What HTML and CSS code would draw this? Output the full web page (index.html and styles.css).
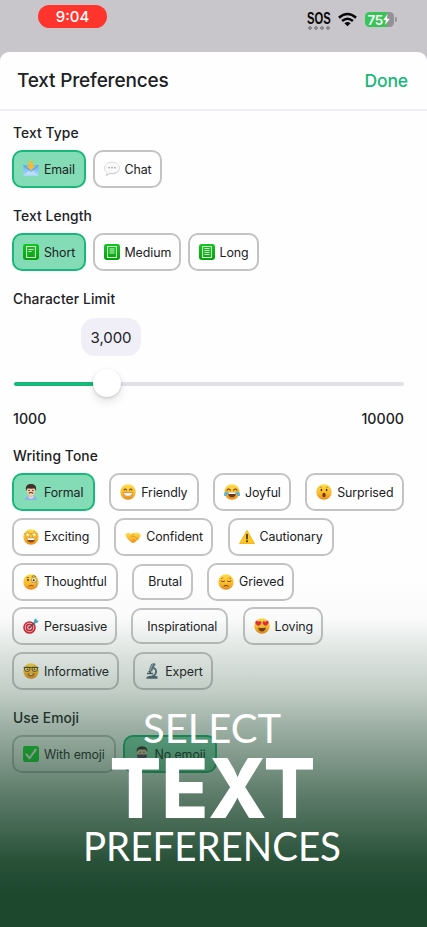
FILE: index.html
```html
<!DOCTYPE html>
<html lang="en">
<head>
<meta charset="utf-8">
<meta name="viewport" content="width=device-width, initial-scale=1">
<title>Text Preferences</title>
<link rel="stylesheet" href="styles.css">
</head>
<body>
<svg class="defs" width="0" height="0" aria-hidden="true">
  <defs>
    <linearGradient id="gold" x1="0" y1="0" x2="0" y2="1"><stop offset="0" stop-color="#ffdc48"/><stop offset=".6" stop-color="#fbb92c"/><stop offset="1" stop-color="#e58a1c"/></linearGradient>
    <linearGradient id="green" x1="0" y1="0" x2="0" y2="1"><stop offset="0" stop-color="#17c427"/><stop offset="1" stop-color="#0a9e12"/></linearGradient>
    <linearGradient id="sky" x1="0" y1="0" x2="0" y2="1"><stop offset="0" stop-color="#6fb2ef"/><stop offset="1" stop-color="#a9d3fb"/></linearGradient>
  </defs>
  <symbol id="mail" viewBox="0 0 16 16"><path fill="url(#sky)" d="M.5 4h15v10.500h-15z"/><path fill="#b9dcfb" d="M.5 14.500 6 9.500h4l5.500 5z"/><path fill="none" stroke="#4a8fd8" stroke-width=".8" d="m.5 4.300 7.500 6 7.500-6"/><path fill="#fdb924" d="M6.200.3h3.600v4.400h2.400L8 9.300 3.800 4.700h2.400z"/></symbol>
  <symbol id="bubble" viewBox="0 0 16 16"><path fill="#fbfbfc" stroke="#d0d1d6" stroke-width=".8" d="M8 1.200c4.300 0 7.500 2.500 7.500 5.800S12.300 12.700 8 12.700c-.9 0-1.700-.1-2.400-.3-.9 1-2.100 1.800-3.600 2.200.8-.9 1.100-1.800 1-3C1.400 10.500.5 8.900.5 7 .5 3.700 3.700 1.200 8 1.200z"/><path fill="none" stroke="#c5c6cb" stroke-width=".8" d="M2 14.500c1.500-.3 2.700-1.100 3.700-2.100 3.600.7 7.600-.5 9.200-3.200"/><circle cx="5" cy="6.700" r=".8" fill="#8d8e94"/><circle cx="8" cy="6.700" r=".8" fill="#8d8e94"/><circle cx="11" cy="6.700" r=".8" fill="#8d8e94"/></symbol>
  <symbol id="page" viewBox="0 0 16 16"><rect width="16" height="16" rx="2.400" fill="url(#green)"/><rect x="3.600" y="2.500" width="8.800" height="11" fill="none" stroke="#d3f8cd" stroke-width="1"/></symbol>
  <symbol id="short" viewBox="0 0 16 16"><use href="#page"/><path stroke="#d3f8cd" d="M5.500 5.500h5M5.500 7.500h3"/></symbol>
  <symbol id="medium" viewBox="0 0 16 16"><use href="#page"/><path stroke="#d3f8cd" d="M5.500 5h5M5.500 7h5M5.500 9h5"/></symbol>
  <symbol id="long" viewBox="0 0 16 16"><use href="#page"/><path stroke="#d3f8cd" d="M5.500 4.500h5M5.500 6.500h5M5.500 8.500h5M5.500 10.500h5"/></symbol>
  <symbol id="man" viewBox="0 0 16 16"><path fill="#8cb5e5" d="M2 16c0-3 2-4.500 6-4.500s6 1.500 6 4.500z"/><path fill="#eab695" d="M6 9h4v3.500l-2 1.700-2-1.700z"/><path fill="#dfe9f5" d="m5.800 12 2.200 1.700 2.200-1.700.4 1.500L8 14.800l-2.600-1.300z"/><ellipse cx="8" cy="6.500" rx="4.300" ry="5.200" fill="#f5cba9"/><path fill="#40312b" d="M3.200 7C2 2.500 4 .1 8 .1s6 2.400 4.800 6.900L11.700 4.500C9 4.800 6 4.600 4.400 4.500z"/><circle cx="6.100" cy="6.400" r=".7" fill="#2e2521"/><circle cx="9.900" cy="6.400" r=".7" fill="#2e2521"/><path d="M5.800 9.300q2.200-1.600 4.400 0" fill="none" stroke="#5b3428" stroke-width="1.200"/></symbol>
  <symbol id="face" viewBox="0 0 16 16"><circle cx="8" cy="8" r="7.700" fill="url(#gold)"/></symbol>
  <symbol id="grin" viewBox="0 0 16 16"><use href="#face"/><path fill="none" stroke="#6b4215" stroke-width="1.100" stroke-linecap="round" d="M4 6q1.200-2 2.400 0M9.600 6q1.200-2 2.400 0"/><path fill="#fff" stroke="#a8702a" stroke-width=".6" d="M3.300 8.700h9.400q-.4 3.700-4.700 3.700T3.300 8.700z"/></symbol>
  <symbol id="joy" viewBox="0 0 16 16"><use href="#face"/><path fill="none" stroke="#6b4215" stroke-width="1.100" stroke-linecap="round" d="M3 6.200q1.700-2.400 3.400 0M9.600 6.200q1.700-2.400 3.400 0"/><path fill="#6a3719" d="M3.600 8.300h8.800q-.4 5-4.400 5t-4.400-5z"/><path fill="#fff" d="M4.200 8.300h7.600l-.3 1.700h-7z"/><path fill="#4cb4ed" d="M3.700 7.400C1.500 7.200-.4 9 .1 11.400c1.300 1.500 3.300.5 3.600-4zm8.600 0c2.200-.2 4.100 1.600 3.600 4-1.300 1.500-3.300.5-3.600-4z"/></symbol>
  <symbol id="wow" viewBox="0 0 16 16"><use href="#face"/><ellipse cx="5.400" cy="6" rx=".8" ry="1.200" fill="#51300e"/><ellipse cx="10.600" cy="6" rx=".8" ry="1.200" fill="#51300e"/><ellipse cx="8" cy="11" rx="1.700" ry="2.200" fill="#713711"/><path fill="none" stroke="#a36317" stroke-width=".6" d="M3.800 3.500 5.800 3M10.200 3l2 .5"/></symbol>
  <symbol id="stars" viewBox="0 0 16 16"><use href="#face"/><path fill="#fff2a0" stroke="#b8701c" stroke-width=".5" d="m4.700 2.300 1 2.200 2.300.2-1.800 1.600.6 2.300-2.100-1.200-2.100 1.200.6-2.300L1.400 4.700l2.300-.2zm6.600 0 1 2.200 2.300.2-1.800 1.600.6 2.300-2.100-1.200-2.100 1.200.6-2.300L8 4.700l2.300-.2z"/><path fill="#8a4b18" d="M3.600 9.300h8.800q-.6 4.300-4.400 4.300T3.600 9.300z"/><path fill="#fff" d="M4.100 9.300h7.800l-.5 1.700H4.600z"/></symbol>
  <symbol id="hands" viewBox="0 0 16 16"><path fill="url(#gold)" d="M.2 5.500 3 3.700l3.500 1.100L9 4l4.200-.2 2.600 2-1.600 4-4.800 3.700q-1.600 1-3-.2L2.200 9.600z"/><path fill="none" stroke="#c47b17" stroke-width=".6" d="M9 4.300 6.300 7.200q1.200 1.300 3-.2l4 3.300M8 10l2.200 2"/></symbol>
  <symbol id="warn" viewBox="0 0 16 16"><path fill="#fdc623" stroke="#f4b719" stroke-linejoin="round" d="m8 1.500 7.400 13H.6z"/><path stroke="#342a18" stroke-width="1.600" stroke-linecap="round" d="M8 5.500v4.300"/><circle cx="8" cy="12.300" r="1" fill="#342a18"/></symbol>
  <symbol id="monocle" viewBox="0 0 16 16"><use href="#face"/><circle cx="5" cy="6" r="1" fill="#51300e"/><circle cx="10.900" cy="6" r="2.600" fill="#ffeca4" stroke="#8d908f" stroke-width=".8"/><circle cx="10.700" cy="6.200" r="1" fill="#51300e"/><path fill="none" stroke="#7c4a10" stroke-width=".8" d="M3.500 3.700 6 3.400M8.700 2.600q2-1.800 4.300 0M5.500 12.300Q8 10.300 10.600 12"/><path fill="none" stroke="#8d908f" stroke-width=".6" d="M13.400 7v7"/></symbol>
  <symbol id="sad" viewBox="0 0 16 16"><use href="#face"/><path fill="none" stroke="#70410d" stroke-linecap="round" d="M3 7q1.700 1.500 3.500.2M9.500 7.200q1.800 1.300 3.500-.2M6 12q2-1.500 4 0"/><path fill="none" stroke="#a66a18" stroke-width=".7" d="m3 4.700 2.500-1M10.500 3.700l2.500 1"/></symbol>
  <symbol id="target" viewBox="0 0 16 16"><circle cx="6.500" cy="9.500" r="6.300" fill="#ce2835"/><circle cx="6.500" cy="9.500" r="4.700" fill="#f3dede"/><circle cx="6.500" cy="9.500" r="3.900" fill="#ce2835"/><circle cx="6.500" cy="9.500" r="2.300" fill="#f3dede"/><circle cx="6.500" cy="9.500" r="1.300" fill="#ce2835"/><path stroke="#33516a" stroke-width="1.100" d="m6.800 9.300 6-5.600"/><path fill="#43a9be" d="m10.700 4.500.5-2.800L13.300.3l.2 2.200 2.400.3-1.500 2-2.800.6z"/></symbol>
  <symbol id="love" viewBox="0 0 16 16"><use href="#face"/><path fill="#e52c3d" d="M4.300 8C.3 5.600 1.100 2.800 2.700 2.800q1.200 0 1.800 1.200.9-1.100 2-.7c1.600.6 1.200 3.300-2.200 4.700zm7.400 0c4-2.400 3.200-5.200 1.600-5.200q-1.200 0-1.800 1.200-.9-1.100-2-.7c-1.600.6-1.200 3.300 2.200 4.700z"/><path fill="#773a13" d="M4.200 9.500q3.800 1.100 7.600 0-.7 3.900-3.800 3.900T4.200 9.500z"/></symbol>
  <symbol id="nerd" viewBox="0 0 16 16"><use href="#face"/><path fill="#f8d978" stroke="#52412b" stroke-width=".9" d="M1.500 4.300h5.300v2q0 2.200-2.600 2.200T1.500 6.300zm7.700 0h5.300v2q0 2.200-2.700 2.200T9.200 6.300z"/><path stroke="#52412b" stroke-width=".8" d="M.5 4.500h15"/><circle cx="4.500" cy="6.200" r=".8" fill="#422a12"/><circle cx="11.500" cy="6.200" r=".8" fill="#422a12"/><path fill="#86501b" d="M4.500 10.500h7q-.8 2.500-3.500 2.500t-3.500-2.500z"/><path fill="#fff" d="M6.500 10.500h3v1.300h-3z"/></symbol>
  <symbol id="scope" viewBox="0 0 16 16"><path fill="#667987" d="m7.200 1 3.400-1 1 2-1.200 1-2.300 5.600-3.300-1.400z"/><path fill="#a9bbc5" d="m8 1.500 1.300-.4-2.700 6.500-1-.5z"/><path fill="none" stroke="#5d7381" stroke-width="1.900" d="M9 4.500q4.500 2 2.500 6.200Q10.300 13 8 13.500"/><path stroke="#4b606d" stroke-width="1.500" d="M3 10.500h6"/><path fill="#526877" d="M2.500 15.800v-1.700q3.500-2 11-.8v2.500z"/><path fill="#2d4354" d="m5 7.800 2.500 1-.8 1.300-2.500-1z"/></symbol>
  <symbol id="check" viewBox="0 0 16 16"><rect width="16" height="16" rx="2.200" fill="#15dd2c"/><path fill="none" stroke="#fff" stroke-width="2" stroke-linecap="round" stroke-linejoin="round" d="m3.500 8.400 3 3.900 6.200-8.700"/></symbol>
  <symbol id="ninja" viewBox="0 0 16 16"><path fill="#543562" d="M2 16q0-4 3-4.500h6q3 .5 3 4.500z"/><ellipse cx="8" cy="7" rx="5" ry="6" fill="#f0c8a8"/><path fill="#30252a" d="M2.700 6Q2 .4 8 .2q6 .2 5.300 5.800l-2-2.500H4.800z"/><path fill="#56376b" d="M3 8.500h10q0 5.300-5 5.500-5-.2-5-5.500z"/><path stroke="#2b2021" stroke-width=".9" d="M5.400 6.300h1.300M9.300 6.300h1.300"/></symbol>
</svg>

<main class="phone">
  <header class="status">
    <span class="time">9:04</span>
    <div class="signals">
      <div class="sos"><span>SOS</span><i class="dots"></i></div>
      <svg class="wifi" viewBox="0 0 20 15"><path fill="none" stroke="#080808" stroke-width="2.700" d="M1 5.600Q10-2.200 19 5.600M4.300 9.100q5.700-4.800 11.400 0"/><path d="M6.700 11.400q3.300-2.700 6.600 0L10 14.600z" fill="#080808"/></svg>
      <div class="battery"><span>75</span><svg viewBox="0 0 7 11"><path d="M4.400 0 .3 6.100h2.500L2.100 11l4.600-6.300H4z"/></svg></div>
    </div>
  </header>
  <section class="sheet">
    <div class="titlebar"><h1>Text Preferences</h1><a class="done">Done</a></div>
    <div class="content">
      <h2>Text Type</h2>
      <div class="row tight">
        <div class="chip w74 on"><svg><use href="#mail"/></svg><span>Email</span></div>
        <div class="chip w70"><svg><use href="#bubble"/></svg><span>Chat</span></div>
      </div>
      <h2>Text Length</h2>
      <div class="row tight">
        <div class="chip w74 on"><svg><use href="#short"/></svg><span>Short</span></div>
        <div class="chip w89"><svg><use href="#medium"/></svg><span>Medium</span></div>
        <div class="chip w71"><svg><use href="#long"/></svg><span>Long</span></div>
      </div>
      <h2>Character Limit</h2>
      <div class="bubble">3,000</div>
      <div class="slider"><div class="fill"></div><div class="thumb"></div></div>
      <div class="range"><span>1000</span><span>10000</span></div>
      <h2>Writing Tone</h2>
      <div class="tones">
        <div class="row">
          <div class="chip w83 on"><svg><use href="#man"/></svg><span>Formal</span></div>
          <div class="chip w90"><svg><use href="#grin"/></svg><span>Friendly</span></div>
          <div class="chip w78"><svg><use href="#joy"/></svg><span>Joyful</span></div>
          <div class="chip w99"><svg><use href="#wow"/></svg><span>Surprised</span></div>
        </div>
        <div class="row">
          <div class="chip w88"><svg><use href="#stars"/></svg><span>Exciting</span></div>
          <div class="chip w99"><svg><use href="#hands"/></svg><span>Confident</span></div>
          <div class="chip w106"><svg><use href="#warn"/></svg><span>Cautionary</span></div>
        </div>
        <div class="row">
          <div class="chip w106"><svg><use href="#monocle"/></svg><span>Thoughtful</span></div>
          <div class="chip w61 plain"><span>Brutal</span></div>
          <div class="chip w87"><svg><use href="#sad"/></svg><span>Grieved</span></div>
        </div>
        <div class="row">
          <div class="chip w105"><svg><use href="#target"/></svg><span>Persuasive</span></div>
          <div class="chip w97 plain"><span>Inspirational</span></div>
          <div class="chip w80"><svg><use href="#love"/></svg><span>Loving</span></div>
        </div>
        <div class="row">
          <div class="chip w107"><svg><use href="#nerd"/></svg><span>Informative</span></div>
          <div class="chip w80"><svg><use href="#scope"/></svg><span>Expert</span></div>
        </div>
      </div>
      <h2 class="emoji-title">Use Emoji</h2>
      <div class="row tight">
        <div class="chip w104"><svg><use href="#check"/></svg><span>With emoji</span></div>
        <div class="chip w94 on"><svg><use href="#ninja"/></svg><span>No emoji</span></div>
      </div>
    </div>
  </section>
  <div class="promo">
    <svg class="caption" viewBox="0 0 427 367">
      <text class="light" x="143" y="182.500" textLength="138" lengthAdjust="spacingAndGlyphs">SELECT</text>
      <text class="heavy" x="109.500" y="257.500" textLength="206" lengthAdjust="spacingAndGlyphs">TEXT</text>
      <text class="light" x="83" y="300.500" textLength="258" lengthAdjust="spacingAndGlyphs">PREFERENCES</text>
    </svg>
  </div>
</main>
</body>
</html>
```
FILE: styles.css
```css
* { box-sizing: border-box; }
body { margin: 0; background: #c8c6ca; font-family: Inter, "Liberation Sans", sans-serif; color: #202124; }
.defs { position: absolute; }
.phone { position: relative; width: 427px; height: 927px; overflow: hidden; background: #c8c6ca; }
.status { height: 52px; padding: 5px 33.500px 0 38px; display: flex; justify-content: space-between; align-items: flex-start; }
.time { width: 69px; height: 23px; border-radius: 12px; background: #fe342d; color: #fff; font-size: 15px; line-height: 23px; font-weight: 500; text-align: center; }
.signals { display: flex; align-items: flex-start; padding-top: 6px; }
.sos { width: 24px; height: 19px; color: #080808; margin-right: 7px; }
.sos span { display: block; font: 700 16px/15px "Liberation Sans", sans-serif; transform: scaleX(.7); transform-origin: left; width: 35px; }
.dots { display: block; width: 24px; height: 4px; background: radial-gradient(circle, #8c8a8e 1.700px, transparent 2.100px) 0 0 / 6px 4px; }
.wifi { width: 19px; height: 15px; margin: 1px 7.500px 0 0; }
.battery { position: relative; display: flex; align-items: center; width: 29px; height: 15px; margin-top: 1px; padding-left: 3px; border-radius: 4.500px; background: linear-gradient(90deg, #35c556 76%, #939195 76%); color: #fff; font-size: 13.500px; font-weight: 600; letter-spacing: -.3px; }
.battery::after { content: ""; position: absolute; left: 30px; top: 5px; width: 2px; height: 5px; border-radius: 0 2px 2px 0; background: #939195; }
.battery svg { width: 7px; height: 11px; fill: #fff; }
.sheet { height: 875px; border-radius: 9px 9px 0 0; background: #fefefe; }
.titlebar { height: 59px; padding: 0 19px 0 17px; display: flex; align-items: center; justify-content: space-between; border-bottom: 2px solid #eff0f6; }
h1 { margin: 0; font-size: 19px; font-weight: 500; letter-spacing: -.17px; }
.done { color: #17b877; font-size: 17.500px; font-weight: 500; letter-spacing: -.1px; }
.content { padding: 14px 23px 0 12px; }
h2 { margin: 0 0 8px 1px; font-size: 13.800px; line-height: 17px; font-weight: 500; letter-spacing: .1px; }
.row { display: flex; align-items: center; gap: 14.250px; height: 38px; }
.tight { gap: 6.500px; margin-bottom: 20px; }
.chip { flex: none; height: 38px; padding-left: 9px; display: flex; align-items: center; gap: 5px; border: 2px solid #c3c3c5; border-radius: 10px; font-size: 12.400px; letter-spacing: -.09px; white-space: nowrap; }
.chip svg { width: 16px; height: 16px; flex: none; }
.chip.on { background: #83dcb5; border-color: #17b878; }
.chip.plain { height: 36px; padding-left: 14px; }
.w61 { width: 60.500px; }
.w70 { width: 69.500px; }
.w71 { width: 71px; }
.w74 { width: 74px; }
.w78 { width: 78px; }
.w80 { width: 80px; }
.w83 { width: 83px; }
.w87 { width: 87px; }
.w88 { width: 88px; }
.w89 { width: 88.500px; }
.w90 { width: 89.500px; }
.w94 { width: 94px; }
.w97 { width: 97px; }
.w99 { width: 99px; }
.w104 { width: 104px; }
.w105 { width: 105px; }
.w106 { width: 106px; }
.w107 { width: 107px; }
.bubble { width: 60px; height: 38px; margin: 10px 0 0 69px; border-radius: 14px; background: #f0eff7; font-size: 15px; line-height: 39px; text-align: center; letter-spacing: -.1px; }
.slider { position: relative; width: 390px; height: 4px; margin: 26px 0 0 1.500px; border-radius: 2px; background: #e3e1e5; }
.fill { width: 93px; height: 4px; border-radius: 2px; background: #17b978; }
.thumb { position: absolute; left: 79.500px; top: -13px; width: 28px; height: 28px; border-radius: 50%; background: #fff; box-shadow: 0 1px 3px rgba(0,0,0,.16), 0 5px 10px rgba(0,0,0,.1); }
.range { display: flex; justify-content: space-between; width: 391px; margin: 24px 0 21px 1px; font-size: 14.200px; line-height: 17px; font-weight: 500; }
.tones { display: flex; flex-direction: column; gap: 6.750px; }
.emoji-title { margin-top: 20px; }
.promo { position: absolute; left: 0; top: 560px; width: 427px; height: 367px; background: linear-gradient(rgba(29,72,46,0) 5%, rgba(29,72,46,.02) 16%, rgba(29,72,46,.14) 25%, rgba(29,72,46,.27) 36%, rgba(29,72,46,.43) 45.500%, rgba(29,72,46,.57) 54.500%, rgba(29,72,46,.71) 63.500%, rgba(29,72,46,.83) 73%, rgba(29,72,46,.95) 82%, #1d482e 91%); }
.caption { display: block; width: 427px; height: 367px; fill: #fff; }
.light { font: 400 40.500px Lato, sans-serif; }
.heavy { font: 800 82px Inter, sans-serif; }
```
